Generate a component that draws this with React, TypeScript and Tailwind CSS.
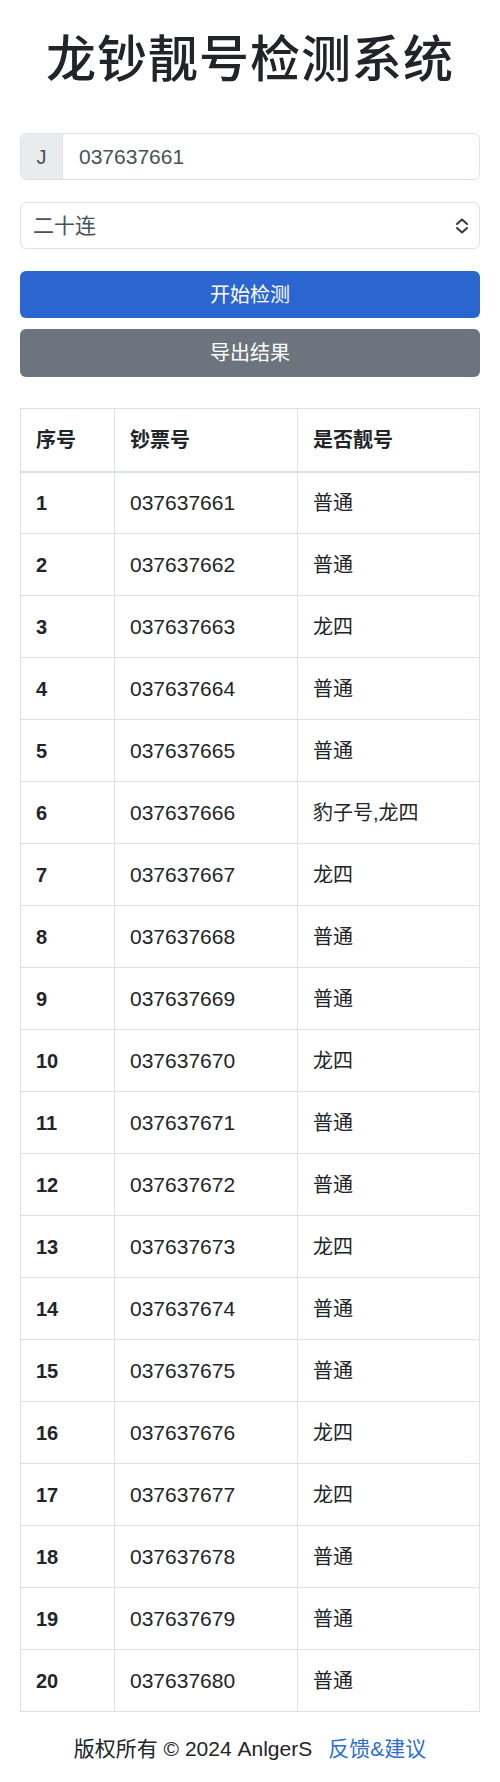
import React from "react";

const rows: [string, string][] = [
  ["037637661", "普通"],
  ["037637662", "普通"],
  ["037637663", "龙四"],
  ["037637664", "普通"],
  ["037637665", "普通"],
  ["037637666", "豹子号,龙四"],
  ["037637667", "龙四"],
  ["037637668", "普通"],
  ["037637669", "普通"],
  ["037637670", "龙四"],
  ["037637671", "普通"],
  ["037637672", "普通"],
  ["037637673", "龙四"],
  ["037637674", "普通"],
  ["037637675", "普通"],
  ["037637676", "龙四"],
  ["037637677", "龙四"],
  ["037637678", "普通"],
  ["037637679", "普通"],
  ["037637680", "普通"],
];

const font = {
  fontFamily: '"Liberation Sans", "Noto Sans CJK SC", sans-serif',
};

export default function App() {
  return (
    <div className="w-[500px] bg-white text-[#212529] px-[20px]" style={font}>
      <h1 className="pt-[28px] text-center text-[50px] leading-[64px] font-medium tracking-[1px]">
        龙钞靓号检测系统
      </h1>

      <div className="mt-[41px] flex h-[47px] rounded-[6px] border border-[#dee2e6]">
        <div className="flex w-[42px] items-center justify-center rounded-l-[6px] border-r border-[#dee2e6] bg-[#e9ecef] text-[20px] text-[#495057]">
          J
        </div>
        <div className="flex flex-1 items-center pl-[16px] text-[21px] text-[#495057]">
          037637661
        </div>
      </div>

      <div className="mt-[22px] flex h-[47px] items-center justify-between rounded-[6px] border border-[#dee2e6] pl-[12px] pr-[10px]">
        <span className="text-[21px] text-[#495057]">二十连</span>
        <svg width="14" height="16" viewBox="0 0 14 16" fill="none" stroke="#343a40" strokeWidth="2" strokeLinecap="round" strokeLinejoin="round">
          <path d="M2 6 L7 1.5 L12 6" />
          <path d="M2 10 L7 14.5 L12 10" />
        </svg>
      </div>

      <div className="mt-[22px] flex h-[47px] items-center justify-center rounded-[6px] bg-[#2b65d0] text-[20px] text-white">
        开始检测
      </div>
      <div className="mt-[11px] flex h-[48px] items-center justify-center rounded-[6px] bg-[#6c757d] text-[20px] text-white">
        导出结果
      </div>

      <table className="mt-[31px] w-full border-collapse text-[20px]">
        <thead>
          <tr className="h-[63px] border-b-2 border-[#dee2e6]">
            <th className="w-[94px] border border-[#dee2e6] pl-[15px] text-left font-bold">序号</th>
            <th className="w-[183px] border border-[#dee2e6] pl-[15px] text-left font-bold">钞票号</th>
            <th className="border border-[#dee2e6] pl-[15px] text-left font-bold">是否靓号</th>
          </tr>
        </thead>
        <tbody>
          {rows.map(([num, kind], i) => (
            <tr key={num} className="h-[62px]">
              <td className="border border-[#dee2e6] pl-[15px] font-bold">{i + 1}</td>
              <td className="border border-[#dee2e6] pl-[15px] text-[21px]">{num}</td>
              <td className="border border-[#dee2e6] pl-[15px]">{kind}</td>
            </tr>
          ))}
        </tbody>
      </table>

      <div className="flex h-[73px] items-center justify-center gap-[16px] text-[21px]">
        <span className="text-[#212529]">版权所有 © 2024 AnlgerS</span>
        <span className="text-[#2d6fcf]">反馈&amp;建议</span>
      </div>
    </div>
  );
}
